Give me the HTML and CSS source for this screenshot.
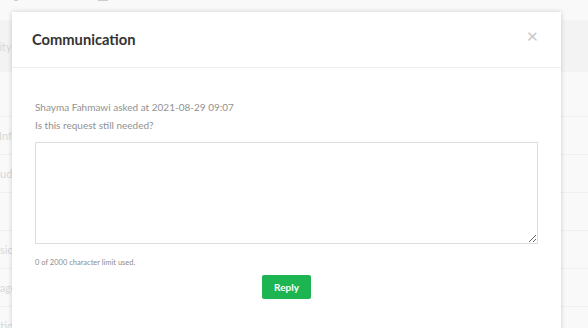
FILE: index.html
```html
<html>
  <head>
    <link rel="stylesheet" href="styles.css">
  </head>
  <body>
    <div class="page">
      <div class="topbar"><span class="mark"></span><span class="mark wide"></span></div>
      <div class="block"><span class="label">Priority</span></div>
      <div class="rows">
        <div class="row"><span class="label">Info</span></div>
        <div class="row"><span class="label shift">Budget</span></div>
        <div class="row"><span class="label"></span></div>
        <div class="row"><span class="label shift2">Decision</span></div>
        <div class="row"><span class="label shift2">Manager</span></div>
        <div class="row"><span class="label shift2">Location</span></div>
      </div>
    </div>

    <div class="modal">
      <div class="modal-header">
        <h2 class="modal-title">Communication</h2>
        <span class="close">&times;</span>
      </div>
      <div class="modal-body">
        <div class="meta">Shayma Fahmawi asked at 2021-08-29 09:07</div>
        <div class="question">Is this request still needed?</div>
        <textarea class="reply-box"></textarea>
        <div class="counter">0 of 2000 character limit used.</div>
        <div class="actions">
          <button class="btn-reply">Reply</button>
        </div>
      </div>
    </div>
  </body>
</html>
```

FILE: styles.css
```css
body {
  margin: 0;
  background-color: #f9f9f9;
  font-family: Lato, "Open Sans", sans-serif;
  overflow: hidden;
}
.page {
  width: 588px;
  height: 328px;
}
.topbar {
  height: 20px;
  display: flex;
  gap: 80px;
  padding-left: 14px;
}
.mark {
  width: 4px;
  height: 1px;
  background-color: #ccc;
}
.mark.wide {
  width: 10px;
}
.block {
  height: 52px;
  background-color: #f3f3f3;
  display: flex;
  align-items: center;
}
.rows {
  margin-top: 44px;
}
.row {
  height: 37px;
  border-top: 1px solid #f0f0f0;
  display: flex;
  align-items: center;
}
.label {
  color: #d8d8d8;
  font-size: 11px;
}
.block .label {
  margin-left: -24px;
}
.row .label {
  margin-left: -1px;
}
.row .label.shift {
  margin-left: -7px;
}
.row .label.shift2 {
  margin-left: -22px;
}
.modal {
  position: absolute;
  left: 12px;
  top: 12px;
  width: 549px;
  height: 330px;
  background-color: white;
  box-shadow: 0 0 5px rgba(0, 0, 0, 0.18);
}
.modal-header {
  height: 56px;
  border-bottom: 1px solid #eeeeee;
  display: flex;
  align-items: center;
  justify-content: space-between;
  padding: 0 23px 0 20px;
  box-sizing: border-box;
}
.modal-title {
  margin: 0;
  margin-top: -2px;
  font-size: 14.7px;
  font-weight: bold;
  color: #333;
}
.close {
  color: #c8c8c8;
  font-size: 20px;
  line-height: 20px;
  margin-top: -10px;
}
.modal-body {
  padding: 30px 23px 0 23px;
}
.meta, .question {
  font-size: 10px;
  color: #919191;
  line-height: 18px;
}
.reply-box {
  display: block;
  width: 100%;
  height: 102px;
  margin-top: 8px;
  border: 1px solid #dddddd;
  box-sizing: border-box;
  resize: vertical;
}
.counter {
  margin-top: 14px;
  font-size: 7.5px;
  color: #8c8c8c;
}
.actions {
  display: flex;
  justify-content: center;
  margin-top: 8px;
}
.btn-reply {
  width: 49px;
  height: 24px;
  border: none;
  border-radius: 2px;
  background-color: #1db552;
  color: white;
  font-family: Lato, sans-serif;
  font-weight: bold;
  font-size: 10px;
}
```
